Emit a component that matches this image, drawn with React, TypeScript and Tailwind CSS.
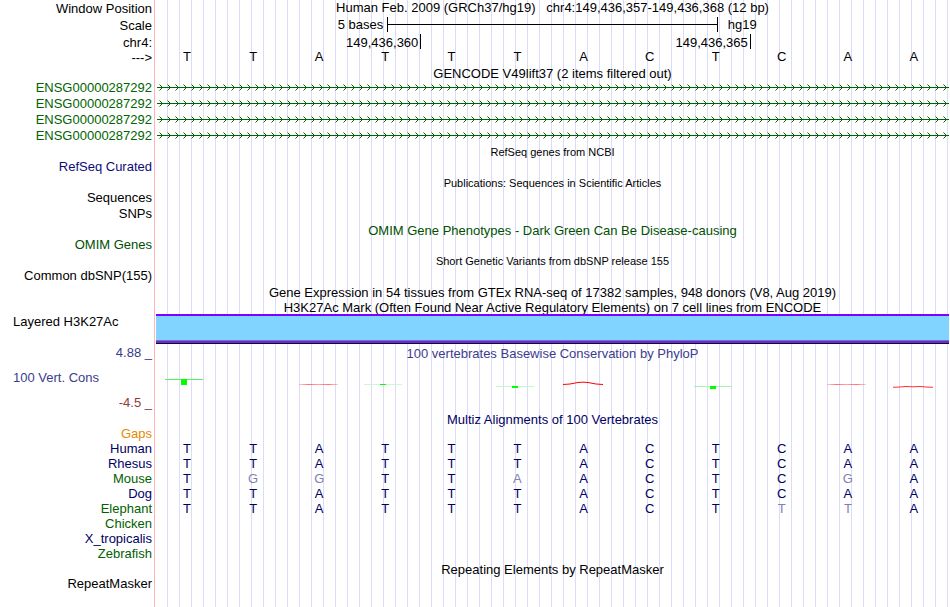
import React from 'react';

type LabelTone = 'black' | 'gene' | 'navy' | 'green' | 'orange';

const TONES: Record<LabelTone, string> = {
  black: 'text-black',
  gene: 'text-[#006400]',
  navy: 'text-[#000064]',
  green: 'text-[#006000]',
  orange: 'text-[#e68a00]',
};

const REFERENCE = 'TTATTTACTCAA';

const GENES = ['ENSG00000287292', 'ENSG00000287292', 'ENSG00000287292', 'ENSG00000287292'];

const SPECIES: { name: string; tone: LabelTone; bases?: string }[] = [
  { name: 'Gaps', tone: 'orange' },
  { name: 'Human', tone: 'navy', bases: 'TTATTTACTCAA' },
  { name: 'Rhesus', tone: 'navy', bases: 'TTATTTACTCAA' },
  { name: 'Mouse', tone: 'green', bases: 'TGGTTAACTCGA' },
  { name: 'Dog', tone: 'navy', bases: 'TTATTTACTCAA' },
  { name: 'Elephant', tone: 'green', bases: 'TTATTTACTTTA' },
  { name: 'Chicken', tone: 'green' },
  { name: 'X_tropicalis', tone: 'navy' },
  { name: 'Zebrafish', tone: 'green' },
];

// One horizontal strip: label on the left, guide lines and track content on the right
const Row: React.FC<{
  className?: string;
  label?: React.ReactNode;
  children?: React.ReactNode;
}> = ({ className = 'h-4 leading-4', label, children }) => (
  <div className={`flex ${className}`}>
    <div className="w-[155px] shrink-0 border-r border-[#ffb4b4] pr-0.5 text-right whitespace-nowrap">{label}</div>
    <div className="ml-px min-w-0 flex-1 bg-[repeating-linear-gradient(to_right,transparent_0_11px,#dcdcf8_11px_12px)]">
      {children}
    </div>
  </div>
);

const Title: React.FC<{ text: string; small?: boolean; tone?: string; label?: React.ReactNode }> = ({
  text,
  small,
  tone = 'text-black',
  label,
}) => (
  <Row className="h-[15px] leading-4" label={label}>
    <h2 className={`text-center whitespace-nowrap ${tone} ${small ? 'text-[11px] leading-4' : 'leading-[17px]'}`}>
      {text}
    </h2>
  </Row>
);

const Label: React.FC<{ text: string; tone?: LabelTone }> = ({ text, tone = 'black' }) => (
  <a href="#" className={TONES[tone]}>{text}</a>
);

const Bases: React.FC<{ bases: string; aligned?: boolean }> = ({ bases, aligned }) => (
  <div className="mr-0.5 -ml-0.5 grid grid-cols-12 text-center">
    {bases.split('').map((base, i) => (
      <span
        key={i}
        className={!aligned ? 'leading-[11px] text-black' : base === REFERENCE[i] ? 'text-[#000064]' : 'text-[#8080b0]'}
      >
        {base}
      </span>
    ))}
  </div>
);

const GeneLine: React.FC<{ id: string }> = ({ id }) => (
  <svg className="block h-4 w-full" shapeRendering="crispEdges">
    <defs>
      <pattern id={id} width="8" height="16" patternUnits="userSpaceOnUse">
        <path d="M4 5h1v1h-1zM5 6h1v1h-1zM4 9h1v1h-1zM5 8h1v1h-1z" fill="#006400" />
        <path d="M3 4h1v1h-1zM3 10h1v1h-1z" fill="#80b280" />
      </pattern>
    </defs>
    <rect width="100%" height="16" fill={`url(#${id})`} />
    <rect x="1" y="7" width="100%" height="1" fill="#006400" />
  </svg>
);

// phyloP wiggle, one mark for each scored base
const Conservation: React.FC = () => (
  <svg className="block h-[51px] w-full" viewBox="0 0 793 51" preserveAspectRatio="none">
    <defs>
      <linearGradient id="fade">
        <stop offset="0" stopColor="#ff0000" stopOpacity="0.2" />
        <stop offset="0.25" stopColor="#ff0000" stopOpacity="0.55" />
        <stop offset="0.5" stopColor="#ff0000" stopOpacity="0.35" />
        <stop offset="0.75" stopColor="#ff0000" stopOpacity="0.55" />
        <stop offset="1" stopColor="#ff0000" stopOpacity="0.2" />
      </linearGradient>
    </defs>
    <g fill="#00ff00">
      <rect x="9" y="19" width="38" height="1" fill="#5af05a" />
      <rect x="25" y="19" width="6" height="6" />
      <rect x="208" y="24" width="38" height="1" fill="#d0f8d0" />
      <rect x="224" y="24" width="6" height="1" />
      <rect x="340" y="26" width="38" height="1" fill="#c4f8c4" />
      <rect x="356" y="26" width="6" height="2" />
      <rect x="538" y="26" width="38" height="1" fill="#a8f4a8" />
      <rect x="554" y="26" width="6" height="3" />
    </g>
    <rect x="143" y="24" width="39" height="1" fill="url(#fade)" />
    <rect x="671" y="24" width="39" height="1" fill="url(#fade)" />
    <path d="M407 24.5L414 24L422 22.5Q427 21.8 432 22.5L440 24L447 24.5" fill="none" stroke="#ff0000" strokeWidth="1" />
    <path d="M737 27.3L744 27L750 26.5L757 26.8L764 26.5L770 27L777 27.3" fill="none" stroke="#ff3030" strokeWidth="1" />
  </svg>
);

const App: React.FC = () => {
  return (
    <main className="flex min-h-screen flex-col overflow-hidden bg-white pr-px font-['Liberation_Sans',Arial,sans-serif] text-[13px] text-black">
      {/* Ruler */}
      <Row className="h-[17px] leading-[17px]" label={<Label text="Window Position" />}>
        <h1 className="text-center leading-[15px] whitespace-pre">
          {'Human Feb. 2009 (GRCh37/hg19)   chr4:149,436,357-149,436,368 (12 bp)'}
        </h1>
      </Row>
      <Row className="h-[17px] leading-[17px]" label={<Label text="Scale" />}>
        <div className="grid grid-cols-24 leading-[15px]">
          <span className="col-span-7 pr-1 text-right">5 bases</span>
          <div className="col-span-10 flex h-[15px] items-center border-x border-black">
            <div className="h-px w-full bg-black" />
          </div>
          <span className="col-span-7 pl-2.5">hg19</span>
        </div>
      </Row>
      <Row className="h-[17px] leading-[17px]" label={<Label text="chr4:" />}>
        <div className="grid grid-cols-24">
          <span className="col-span-8 -mr-px h-[15px] border-r border-black pr-0.5 text-right">149,436,360</span>
          <span className="col-span-10 h-[15px] border-r border-black pr-0.5 text-right">149,436,365</span>
        </div>
      </Row>
      <Row className="h-3.5 leading-[13px]" label={<Label text="--->" />}>
        <Bases bases={REFERENCE} />
      </Row>

      {/* Genes */}
      <Title text="GENCODE V49lift37 (2 items filtered out)" />
      {GENES.map((gene, i) => (
        <Row key={i} label={<Label text={gene} tone="gene" />}>
          <GeneLine id={`strand-${i}`} />
        </Row>
      ))}
      <Title text="RefSeq genes from NCBI" small />
      <Row label={<a href="#" className="text-[#0c0c78]">RefSeq Curated</a>} />

      {/* Publications and variants */}
      <Title text="Publications: Sequences in Scientific Articles" small />
      <Row label={<Label text="Sequences" />} />
      <Row label={<Label text="SNPs" />} />
      <Title text="OMIM Gene Phenotypes - Dark Green Can Be Disease-causing" tone="text-[#005000]" />
      <Row label={<a href="#" className="text-[#005000]">OMIM Genes</a>} />
      <Title text="Short Genetic Variants from dbSNP release 155" small />
      <Row label={<Label text="Common dbSNP(155)" />} />

      {/* Expression and regulation */}
      <Title text="Gene Expression in 54 tissues from GTEx RNA-seq of 17382 samples, 948 donors (V8, Aug 2019)" />
      <Title text="H3K27Ac Mark (Often Found Near Active Regulatory Elements) on 7 cell lines from ENCODE" />
      <Row className="h-[31px] leading-4" label={<a href="#" className="block pl-[13px] text-left">Layered H3K27Ac</a>}>
        <div className="flex h-[30px] flex-col">
          <div className="h-0.5 bg-[#8000ff]" />
          <div className="flex-1 bg-[#80d4ff]" />
          <div className="h-px bg-[#8068d8]" />
          <div className="h-0.5 bg-[#6030c8]" />
          <div className="h-px bg-[#180838]" />
        </div>
      </Row>

      {/* Conservation */}
      <Title
        text="100 vertebrates Basewise Conservation by PhyloP"
        tone="text-[#3c3c8c]"
        label={<span className="text-[#3c3c8c]">4.88 _</span>}
      />
      <Row
        className="h-[51px] leading-4"
        label={
          <div className="flex flex-col gap-[9px] pt-2.5">
            <a href="#" className="pl-[13px] text-left text-[#3c3c8c]">100 Vert. Cons</a>
            <span className="text-[#8c3c3c]">-4.5 _</span>
          </div>
        }
      >
        <Conservation />
      </Row>

      {/* Alignments */}
      <Title text="Multiz Alignments of 100 Vertebrates" tone="text-[#000064]" />
      {SPECIES.map(({ name, tone, bases }) => (
        <Row key={name} className="h-[15px] leading-[15px]" label={<Label text={name} tone={tone} />}>
          {bases && <Bases bases={bases} aligned />}
        </Row>
      ))}

      {/* Repeats */}
      <Title text="Repeating Elements by RepeatMasker" />
      <Row className="flex-1 leading-4" label={<Label text="RepeatMasker" />} />
    </main>
  );
};

export default App;
